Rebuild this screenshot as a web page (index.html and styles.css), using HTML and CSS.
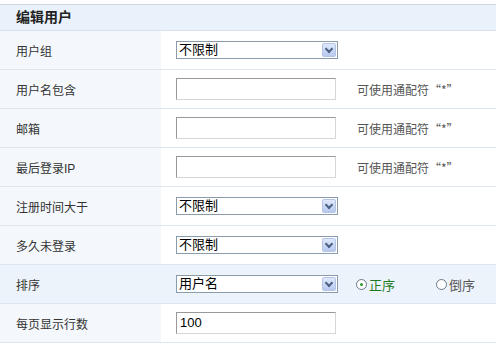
FILE: index.html
```html
<!DOCTYPE html>
<html lang="zh">
<head>
    <meta charset="UTF-8">
    <title>编辑用户</title>
    <link rel="stylesheet" href="styles.css">
</head>
<body>
    <div class="panel">
        <div class="panel-title">编辑用户</div>
        <div class="row">
            <div class="label">用户组</div>
            <div class="field">
                <div class="select">不限制<span class="arrow"></span></div>
            </div>
        </div>
        <div class="row">
            <div class="label">用户名包含</div>
            <div class="field">
                <div class="input"></div>
                <span class="hint">可使用通配符“*”</span>
            </div>
        </div>
        <div class="row">
            <div class="label">邮箱</div>
            <div class="field">
                <div class="input"></div>
                <span class="hint">可使用通配符“*”</span>
            </div>
        </div>
        <div class="row">
            <div class="label">最后登录IP</div>
            <div class="field">
                <div class="input"></div>
                <span class="hint">可使用通配符“*”</span>
            </div>
        </div>
        <div class="row">
            <div class="label">注册时间大于</div>
            <div class="field">
                <div class="select">不限制<span class="arrow"></span></div>
            </div>
        </div>
        <div class="row">
            <div class="label">多久未登录</div>
            <div class="field">
                <div class="select">不限制<span class="arrow"></span></div>
            </div>
        </div>
        <div class="row active">
            <div class="label">排序</div>
            <div class="field">
                <div class="select">用户名<span class="arrow"></span></div>
                <span class="radio checked"><span class="dot"></span>正序</span>
                <span class="radio"><span class="dot"></span>倒序</span>
            </div>
        </div>
        <div class="row">
            <div class="label">每页显示行数</div>
            <div class="field">
                <div class="input">100</div>
            </div>
        </div>
    </div>
</body>
</html>
```

FILE: styles.css
```css
html, body {
    margin: 0;
    background: #fff;
    font-family: "Liberation Sans", "Noto Sans CJK SC", sans-serif;
    font-size: 12px;
    color: #333;
}
.panel {
    padding-top: 4px;
}
.panel-title {
    height: 25px;
    line-height: 25px;
    padding-left: 16px;
    background: #e9f1fa;
    border-top: 1px solid #cdd6e0;
    border-bottom: 1px solid #d6e1ec;
    font-size: 14px;
    font-weight: bold;
    color: #222;
}
.row {
    display: grid;
    grid-template-columns: 161px 1fr;
    height: 38px;
    border-bottom: 1px solid #dde6ef;
}
.label {
    display: flex;
    align-items: center;
    padding-left: 16px;
    background: #f4f8fc;
}
.field {
    display: flex;
    align-items: center;
    padding-left: 15px;
}
.row.active,
.row.active .label {
    background: #edf3fa;
}
.select {
    position: relative;
    width: 158px;
    height: 16px;
    line-height: 16px;
    padding-left: 2px;
    border: 1px solid #8a9bab;
    background: #fff;
    color: #000;
    font-size: 13px;
}
.arrow {
    position: absolute;
    right: 1px;
    top: 1px;
    width: 14px;
    height: 14px;
    border-radius: 2px;
    background: linear-gradient(to bottom, #dfe8fb, #b8c9f0);
    border: 1px solid #b3c3e6;
    box-sizing: border-box;
}
.arrow::after {
    content: "";
    position: absolute;
    left: 3px;
    top: 2px;
    width: 4px;
    height: 4px;
    border-right: 2px solid #4d6185;
    border-bottom: 2px solid #4d6185;
    transform: rotate(45deg);
}
.input {
    width: 155px;
    height: 20px;
    line-height: 20px;
    padding-left: 3px;
    border: 1px solid #d6d6d6;
    border-top-color: #999;
    border-left-color: #999;
    background: #fff;
    color: #000;
    font-size: 13px;
}
.hint {
    margin-left: 21px;
    color: #555;
    font-family: "Noto Sans CJK SC", sans-serif;
}
.radio {
    display: flex;
    align-items: center;
    color: #555;
    font-size: 13px;
    margin-left: 18px;
    width: 58px;
}
.radio + .radio {
    margin-left: 22px;
}
.radio.checked {
    color: #1f7a1f;
}
.dot {
    position: relative;
    width: 11px;
    height: 11px;
    margin-right: 2px;
    border: 1px solid #6b7a8c;
    border-radius: 50%;
    background: #fff;
    box-sizing: border-box;
}
.radio.checked .dot::after {
    content: "";
    position: absolute;
    left: 3px;
    top: 3px;
    width: 3px;
    height: 3px;
    border-radius: 50%;
    background: #2c9a2c;
}
```
